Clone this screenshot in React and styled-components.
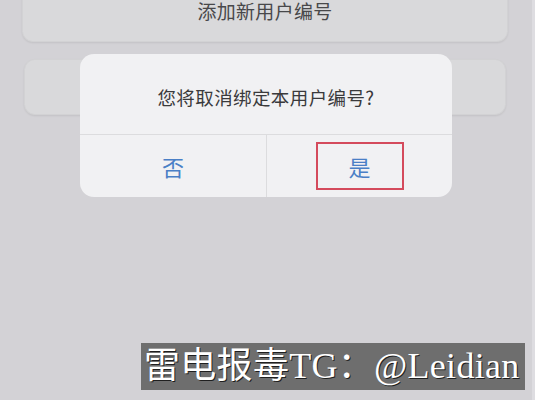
import React from 'react';
import styled, { createGlobalStyle } from 'styled-components';

const GlobalStyle = createGlobalStyle`
  html, body {
    margin: 0;
    padding: 0;
    background: #d3d2d6;
  }
  body {
    font-family: "Noto Sans CJK SC", "Noto Sans", sans-serif;
  }
`;

function App() {
  return (
    <Screen>
      <GlobalStyle />
      <Page>
        <Card $height={60} $top={-18}>
          <span>添加新用户编号</span>
        </Card>
        <Card $height={56} $top={17} $inset={2} />
      </Page>
      <EdgeStrip />

      <Dialog>
        <DialogTitle>您将取消绑定本用户编号?</DialogTitle>
        <DialogActions>
          <ActionButton>否</ActionButton>
          <ActionButton>
            <Highlight>是</Highlight>
          </ActionButton>
        </DialogActions>
      </Dialog>

      <Watermark>雷电报毒TG：@Leidian</Watermark>
    </Screen>
  );
}

const Screen = styled.div`
  position: relative;
  width: 535px;
  height: 400px;
  overflow: hidden;
  background: #d3d2d6;
  display: flex;
`;

const Page = styled.div`
  flex: 1;
  display: flex;
  flex-direction: column;
  padding: 0 24px 0 22px;
`;

const EdgeStrip = styled.div`
  width: 3px;
  background: #dedde1;
`;

const Card = styled.div`
  height: ${(p) => p.$height}px;
  margin-top: ${(p) => p.$top}px;
  margin-left: ${(p) => p.$inset || 0}px;
  margin-right: ${(p) => p.$inset || 0}px;
  background: #d9d9db;
  border-radius: 11px;
  box-shadow: 0 1px 2px rgba(0, 0, 0, 0.08), inset 0 0 0 1px rgba(0, 0, 0, 0.03);
  display: flex;
  align-items: flex-end;
  justify-content: center;
  padding-bottom: 22px;
  box-sizing: border-box;

  span {
    font-size: 19px;
    line-height: 1;
    color: #48484a;
    letter-spacing: 0.3px;
  }
`;

const Dialog = styled.div`
  position: absolute;
  left: 80px;
  top: 54px;
  width: 372px;
  height: 143px;
  background: #f1f1f3;
  border-radius: 14px;
  display: flex;
  flex-direction: column;
  overflow: hidden;
`;

const DialogTitle = styled.div`
  height: 81px;
  display: flex;
  align-items: center;
  justify-content: center;
  padding-top: 6px;
  box-sizing: border-box;
  font-size: 18.5px;
  color: #3a3a3c;
  letter-spacing: 0.4px;
  border-bottom: 1px solid #dcdcde;
`;

const DialogActions = styled.div`
  flex: 1;
  display: grid;
  grid-template-columns: 1fr 1fr;
`;

const ActionButton = styled.div`
  display: flex;
  align-items: center;
  justify-content: center;
  font-size: 22px;
  color: #4a7fc6;

  & + & {
    border-left: 1px solid #dcdcde;
  }
`;

const Highlight = styled.span`
  width: 84px;
  height: 44px;
  border: 2px solid #d44a5c;
  display: flex;
  align-items: center;
  justify-content: center;
`;

const Watermark = styled.div`
  position: absolute;
  left: 141px;
  top: 343px;
  width: 384px;
  height: 47px;
  background: #6e6e6e;
  color: #ffffff;
  font-family: "Liberation Serif", "Noto Sans CJK SC", serif;
  font-size: 36px;
  letter-spacing: 0.3px;
  line-height: 47px;
  white-space: nowrap;
  padding-left: 3px;
  box-sizing: border-box;
  text-shadow: 1px 1px 0 #1f1f1f;
  overflow: hidden;
`;

export default App;
